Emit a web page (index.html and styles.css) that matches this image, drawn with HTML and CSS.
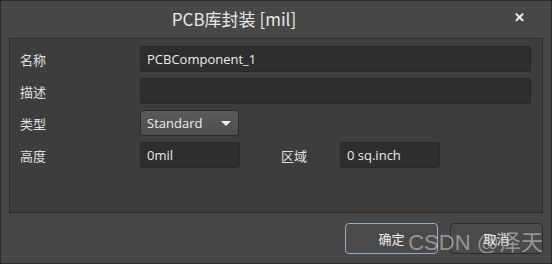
FILE: index.html
```html
<!DOCTYPE html>
<html lang="zh-CN">
<head>
    <meta charset="UTF-8">
    <title>PCB库封装 [mil]</title>
    <link rel="stylesheet" href="styles.css">
</head>
<body>
    <div class="dialog">
        <div class="title-bar">
            <span class="title">PCB库封装 [mil]</span>
            <span class="close">&#x2715;</span>
        </div>
        <div class="panel">
            <div class="form">
                <label>名称</label>
                <input type="text" class="field wide" value="PCBComponent_1">

                <label>描述</label>
                <input type="text" class="field wide" value="">

                <label>类型</label>
                <div class="select">
                    <span>Standard</span>
                    <span class="caret"></span>
                </div>

                <label>高度</label>
                <div class="pair">
                    <input type="text" class="field short" value="0mil">
                    <label class="area-label">区域</label>
                    <input type="text" class="field short" value="0 sq.inch">
                </div>
            </div>
        </div>
        <div class="footer">
            <button type="button" class="btn default">确定</button>
            <button type="button" class="btn">取消</button>
            <span class="watermark">CSDN @泽天</span>
        </div>
    </div>
</body>
</html>
```

FILE: styles.css
```css
body {
    margin: 0;
    background-color: #2a2a2a;
    font-family: 'Noto Sans CJK SC', 'Noto Sans', sans-serif;
}
.dialog {
    width: 550px;
    height: 262px;
    border: 1px solid #2b2b2b;
    background-color: #474747;
    color: #e2e2e2;
    display: flex;
    flex-direction: column;
}
.title-bar {
    position: relative;
    height: 37px;
    display: flex;
    justify-content: center;
    align-items: center;
}
.title {
    font-size: 17px;
    color: #e8e8e8;
    margin-left: -84px;
    margin-top: -2px;
}
.close {
    position: absolute;
    right: 26px;
    top: 6px;
    font-size: 13px;
    font-weight: bold;
    color: #f2f2f2;
}
.panel {
    margin: 0 8px;
    height: 175px;
    border: 1px solid #2f2f2f;
    background-color: #3d3d3d;
    padding: 7px 11px 0 10px;
    box-sizing: border-box;
}
.form {
    display: grid;
    grid-template-columns: 120px 1fr;
    grid-auto-rows: 26px;
    row-gap: 6px;
    align-items: center;
}
label {
    font-size: 13px;
    color: #e0e0e0;
}
.field {
    height: 26px;
    box-sizing: border-box;
    background-color: #2e2e2e;
    border: 1px solid #282828;
    border-radius: 3px;
    color: #ececec;
    font-family: 'Open Sans', 'Noto Sans', sans-serif;
    font-size: 13px;
    padding: 0 6px;
    outline: none;
}
.wide {
    width: 100%;
}
.short {
    width: 100px;
}
.select {
    width: 99px;
    height: 26px;
    box-sizing: border-box;
    border: 1px solid #2c2c2c;
    border-radius: 3px;
    background: linear-gradient(#5a5a5a, #4e4e4e);
    display: flex;
    align-items: center;
    justify-content: space-between;
    padding: 0 7px 0 6px;
    font-family: 'Open Sans', 'Noto Sans', sans-serif;
    font-size: 13px;
    color: #ececec;
}
.caret {
    width: 0;
    height: 0;
    border-left: 5px solid transparent;
    border-right: 5px solid transparent;
    border-top: 5px solid #f0f0f0;
}
.pair {
    display: flex;
    align-items: center;
}
.area-label {
    width: 59px;
    margin-left: 41px;
}
.footer {
    position: relative;
    flex: 1;
    display: flex;
    justify-content: flex-end;
    align-items: flex-start;
    gap: 12px;
    padding: 10px 8px 0 0;
}
.btn {
    width: 93px;
    height: 31px;
    border: 1px solid #2c2c2c;
    border-radius: 4px;
    background-color: #4a4a4a;
    color: #efefef;
    font-family: 'Noto Sans CJK SC', sans-serif;
    font-size: 13px;
}
.default {
    border-color: #8eaecb;
}
.watermark {
    position: absolute;
    right: 8px;
    top: 11px;
    font-family: 'Liberation Sans', 'Noto Sans CJK SC', sans-serif;
    font-size: 22px;
    color: rgba(215, 215, 215, 0.55);
    pointer-events: none;
}
```
